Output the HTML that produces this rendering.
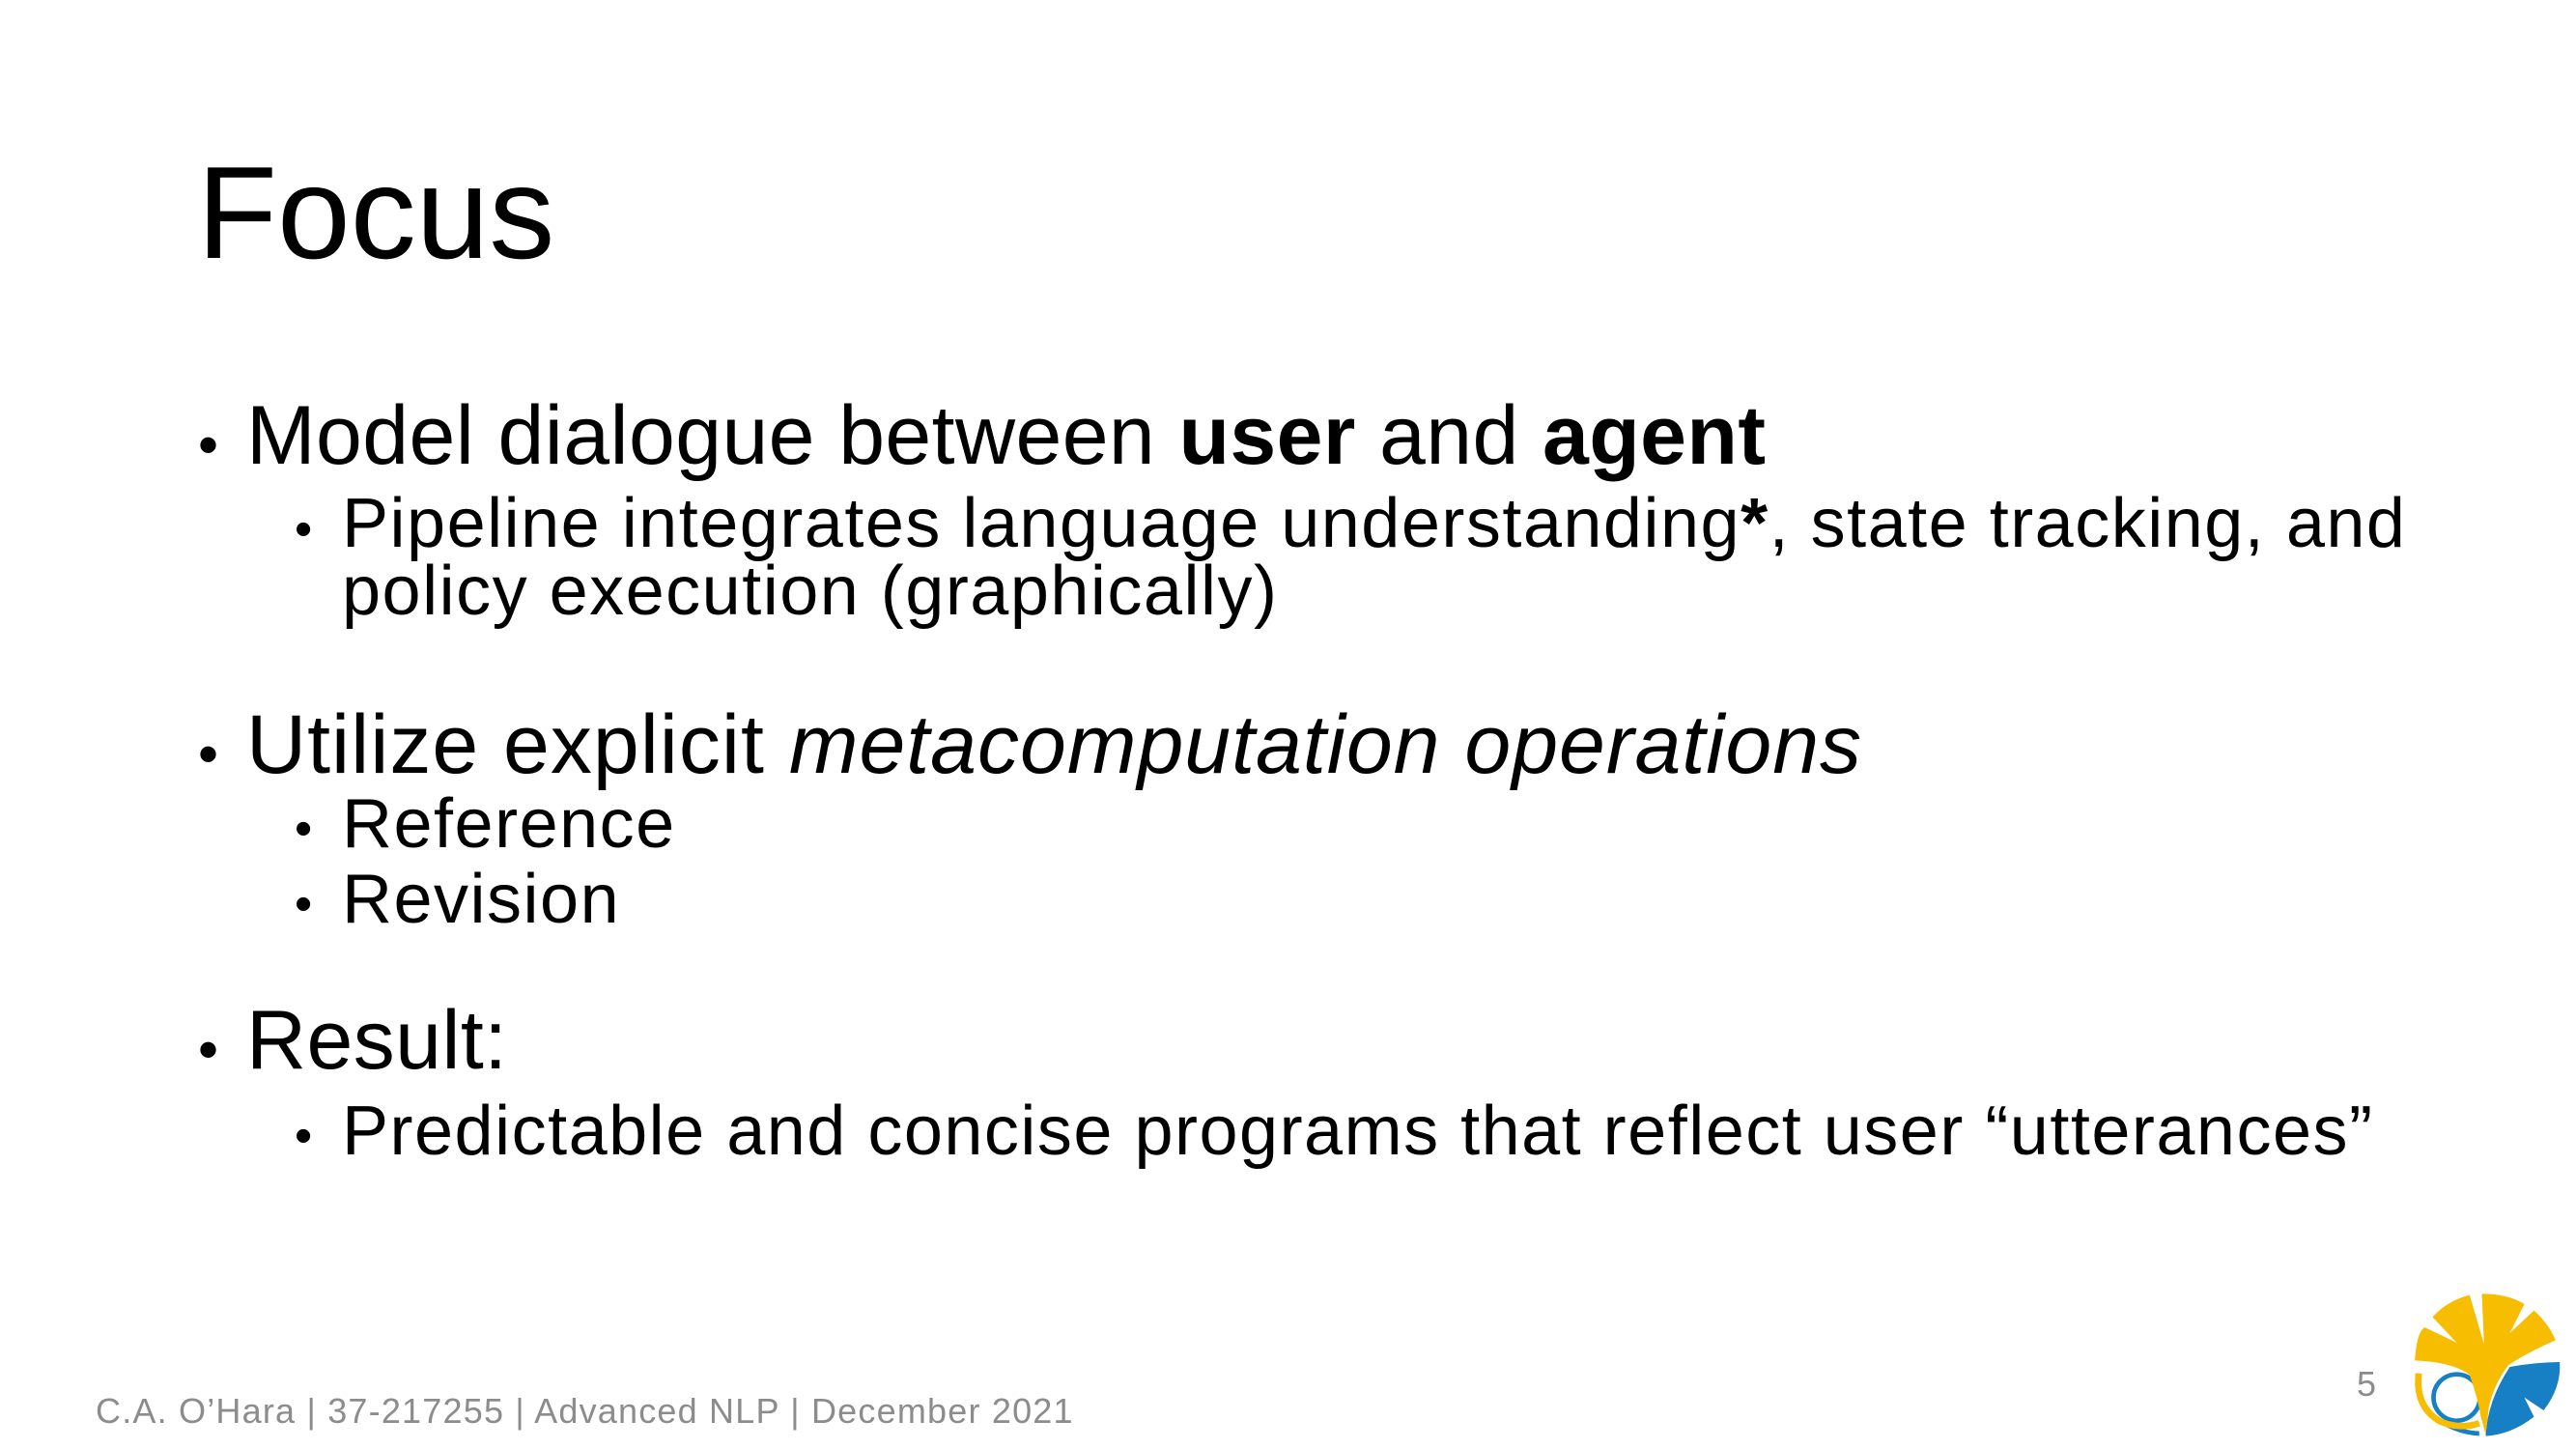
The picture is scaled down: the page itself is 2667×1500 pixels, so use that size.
<!DOCTYPE html>
<html><head><meta charset="utf-8"><style>
html,body{margin:0;padding:0;background:#fff}
body{width:2667px;height:1500px;position:relative;overflow:hidden;font-family:"Liberation Sans",sans-serif;color:#000}
.t{position:absolute;white-space:nowrap}
.title{left:204px;top:140px;font-size:136px;line-height:160px}
.l1{font-size:86px;left:255px;letter-spacing:0.4px}
.l2{font-size:72px;left:354px;letter-spacing:1.5px}
.b1,.b2{position:absolute}
.b1{left:205px;font-size:60px}
.b2{left:305px;font-size:52px}
.foot{left:99px;top:1440px;font-size:36px;color:#8c8c8c;letter-spacing:1.2px}
</style></head><body>
<div class="t title">Focus</div>

<div class="t b1" style="top:426px">•</div>
<div class="t l1" style="top:402px">Model dialogue between <b>user</b> and <b>agent</b></div>
<div class="t b2" style="top:518px">•</div>
<div class="t l2" style="top:507px;line-height:70px">Pipeline integrates language understanding<b>*</b>, state tracking, and<br>policy execution (graphically)</div>

<div class="t b1" style="top:746px">•</div>
<div class="t l1" style="top:722px;letter-spacing:1px">Utilize explicit <i>metacomputation operations</i></div>
<div class="t b2" style="top:828px">•</div>
<div class="t l2" style="top:812px">Reference</div>
<div class="t b2" style="top:906px">•</div>
<div class="t l2" style="top:890px">Revision</div>

<div class="t b1" style="top:1052px">•</div>
<div class="t l1" style="top:1028px">Result:</div>
<div class="t b2" style="top:1146px">•</div>
<div class="t l2" style="top:1130px">Predictable and concise programs that reflect user “utterances”</div>

<div class="t foot">C.A. O’Hara | 37-217255 | Advanced NLP | December 2021</div>
<div class="t" style="left:2440px;top:1412px;font-size:36px;color:#8c8c8c">5</div>

<svg style="position:absolute;left:2400px;top:1300px" width="267" height="200" viewBox="0 0 800 600">
<path fill="#1780c4" d="M595,345 Q680,330 750,330 Q755,410 700,480 L640,440 L670,500 Q600,555 520,560 Q525,450 595,345 Z"/>
<circle cx="430" cy="440" r="72" fill="none" stroke="#1780c4" stroke-width="14"/>
<path d="M400,525 Q450,550 500,552" fill="none" stroke="#1780c4" stroke-width="14"/>
<path fill="#f7bd00" d="M300,325 Q305,240 330,222 L430,270 L355,190 Q400,140 470,122 L515,275 L508,118 Q590,118 640,150 L595,240 L670,170 Q715,210 737,262 Q650,300 590,340 Q545,400 530,470 L520,555 L505,500 Q495,440 470,370 Q420,330 300,325 Z"/>
<path d="M312,365 Q300,470 380,515 Q440,540 500,520" fill="none" stroke="#f7bd00" stroke-width="20"/>
</svg>
</body></html>
